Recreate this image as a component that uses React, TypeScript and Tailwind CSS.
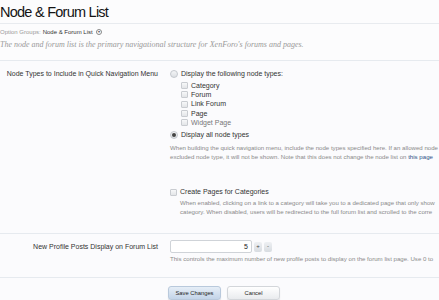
import React from "react";

function Radio({ checked }: { checked?: boolean }) {
  return (
    <span className="inline-flex h-[8px] w-[8px] shrink-0 items-center justify-center rounded-full border border-[#c4c8ce] bg-gradient-to-b from-[#f4f5f7] to-[#dcdfe3]">
      {checked && <span className="h-[4px] w-[4px] rounded-full bg-[#444]" />}
    </span>
  );
}

function Check() {
  return (
    <span className="inline-block h-[7px] w-[7px] shrink-0 rounded-[1px] border border-[#c9ccd1] bg-gradient-to-b from-[#f7f8f9] to-[#e3e5e8]" />
  );
}

const nodeTypes = ["Category", "Forum", "Link Forum", "Page", "Widget Page"];

export default function App() {
  return (
    <div
      className="h-[300px] w-[439px] overflow-hidden bg-[#fcfcfd] text-[#222]"
      style={{ fontFamily: '"Liberation Sans", Arial, sans-serif' }}
    >
      <div className="h-[24px] border-b border-[#e8ebef] pt-[3px]">
        <h1 className="text-[14.5px] leading-[18px] tracking-[-0.75px] text-[#141414]">
          Node &amp; Forum List
        </h1>
      </div>

      <div className="flex h-[14px] items-center gap-[2px] pt-[2px] text-[6px]">
        <span className="text-[#999]">Option Groups:</span>
        <span className="text-[#333]">Node &amp; Forum List</span>
        <span className="ml-[1px] inline-flex h-[6px] w-[6px] items-center justify-center rounded-full border border-[#888] text-[4px] leading-none text-[#555]">
          ▾
        </span>
      </div>

      <div
        className="h-[22px] whitespace-nowrap pt-[1px] text-[8px] italic leading-[12px] text-[#999]"
        style={{ fontFamily: '"Liberation Serif", Georgia, serif' }}
      >
        The node and forum list is the primary navigational structure for XenForo's forums and pages.
      </div>

      <div className="border-t border-[#e6eaef] bg-[#fbfbfd]">
        {/* quick navigation node types */}
        <div className="flex pt-[8px]">
          <div className="w-[160px] shrink-0 pr-[2px] text-right text-[7px] leading-[10px] text-[#333]">
            Node Types to Include in Quick Navigation Menu
          </div>
          <div className="ml-[10px] flex-1 whitespace-nowrap text-[7px] leading-[10px] text-[#333]">
            <div className="flex items-center gap-[3px]">
              <Radio />
              <span>Display the following node types:</span>
            </div>
            <div className="ml-[11px] mt-[2px] flex flex-col">
              {nodeTypes.map((t) => (
                <div key={t} className="flex h-[9.3px] items-center gap-[3px]">
                  <Check />
                  <span className={t === "Widget Page" ? "text-[#777]" : ""}>{t}</span>
                </div>
              ))}
            </div>
            <div className="mt-[3px] flex items-center gap-[3px]">
              <Radio checked />
              <span>Display all node types</span>
            </div>
            <div className="mt-[3px] text-[6.1px] leading-[9px] text-[#8a8a8a]">
              <div>
                When building the quick navigation menu, include the node types specified here. If an allowed node
              </div>
              <div>
                excluded node type, it will not be shown. Note that this does not change the node list on{" "}
                <span className="text-[#2b4f86]">this page</span>
              </div>
            </div>
          </div>
        </div>

        {/* create pages */}
        <div className="flex pt-[26px]">
          <div className="w-[160px] shrink-0" />
          <div className="ml-[10px] flex-1 whitespace-nowrap">
            <div className="flex items-center gap-[3px] text-[7px] leading-[10px] text-[#333]">
              <Check />
              <span>Create Pages for Categories</span>
            </div>
            <div className="ml-[10px] mt-[1px] text-[6.1px] leading-[9px] text-[#8a8a8a]">
              <div>When enabled, clicking on a link to a category will take you to a dedicated page that only show</div>
              <div>category. When disabled, users will be redirected to the full forum list and scrolled to the corre</div>
            </div>
          </div>
        </div>

        {/* new profile posts */}
        <div className="mt-[17px] flex border-t border-[#e6eaef] pt-[6px]">
          <div className="w-[160px] shrink-0 pr-[2px] pt-[2px] text-right text-[7px] leading-[10px] text-[#333]">
            New Profile Posts Display on Forum List
          </div>
          <div className="ml-[10px] flex-1 whitespace-nowrap">
            <div className="flex items-center gap-[2px]">
              <div className="flex h-[13px] w-[82px] items-center justify-end rounded-[2px] border border-[#cfd3d8] bg-white pr-[3px] text-[7px] text-[#222]">
                5
              </div>
              <span className="flex h-[10px] w-[8px] items-center justify-center rounded-[2px] bg-gradient-to-b from-[#eef0f3] to-[#d8dce1] text-[6px] text-[#444]">
                +
              </span>
              <span className="flex h-[10px] w-[8px] items-center justify-center rounded-[2px] bg-gradient-to-b from-[#eef0f3] to-[#d8dce1] text-[6px] text-[#444]">
                -
              </span>
            </div>
            <div className="mt-[1px] text-[6.1px] leading-[9px] text-[#8a8a8a]">
              This controls the maximum number of new profile posts to display on the forum list page. Use 0 to
            </div>
          </div>
        </div>

        {/* buttons */}
        <div className="mt-[14px] flex gap-[6px] border-t border-[#e6eaef] pl-[168px] pt-[8px]">
          <button className="h-[14px] w-[53px] rounded-[3px] border border-[#b9c9dc] bg-gradient-to-b from-[#e6eef7] to-[#c3d4e8] text-[5.8px] text-[#222] shadow-[0_1px_1px_rgba(0,0,0,0.15)]">
            Save Changes
          </button>
          <button className="h-[14px] w-[53px] rounded-[3px] border border-[#d3d6da] bg-gradient-to-b from-[#ffffff] to-[#e9ebee] text-[5.8px] text-[#222] shadow-[0_1px_1px_rgba(0,0,0,0.12)]">
            Cancel
          </button>
        </div>
      </div>
    </div>
  );
}
